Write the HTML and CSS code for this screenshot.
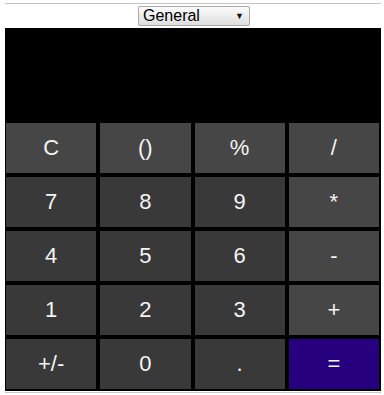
FILE: index.html
```html
<!DOCTYPE html>
<html lang="en">
<head>
  <meta charset="UTF-8" />
  <meta name="viewport" content="width=device-width, initial-scale=1.0" />
  <title>Calculator</title>
  <link rel="stylesheet" href="styles.css">
</head>
<body>
  <hr class="top-rule">
  <div class="mode-bar">
    <div class="mode-select">
      <span class="mode-label">General</span>
      <span class="mode-arrow">&#9660;</span>
    </div>
  </div>

  <div class="calc">
    <div class="display" id="display"></div>
    <div class="keys">
      <button class="key light">C</button>
      <button class="key light">()</button>
      <button class="key light">%</button>
      <button class="key light">/</button>

      <button class="key">7</button>
      <button class="key">8</button>
      <button class="key">9</button>
      <button class="key light">*</button>

      <button class="key">4</button>
      <button class="key">5</button>
      <button class="key">6</button>
      <button class="key light">-</button>

      <button class="key">1</button>
      <button class="key">2</button>
      <button class="key">3</button>
      <button class="key light">+</button>

      <button class="key">+/-</button>
      <button class="key">0</button>
      <button class="key">.</button>
      <button class="key equals">=</button>
    </div>
  </div>
  <div class="bottom-rule"></div>
</body>
</html>
```

FILE: styles.css
```css
body {
  font-family: "Liberation Sans", Arial, sans-serif;
  background: white;
  margin: 0;
  padding: 0 3px 0 5px;
}
.top-rule {
  margin: 3px 0 0 0;
  border: none;
  border-top: 1px solid #c4c4c4;
  height: 0;
}
.mode-bar {
  display: flex;
  justify-content: center;
  padding: 2px 0 2px 0;
}
.mode-select {
  width: 103px;
  height: 18px;
  border: 1px solid #a9a9a9;
  border-radius: 2px;
  background: linear-gradient(#fbfbfb, #dedede);
  display: flex;
  align-items: center;
  justify-content: space-between;
  padding: 0 3px 0 4px;
  box-sizing: content-box;
  margin-left: 2px;
}
.mode-label {
  font-size: 16px;
  color: #000;
  line-height: 18px;
}
.mode-arrow {
  font-size: 9px;
  color: #111;
  margin-right: 2px;
}
.calc {
  background: #000;
  width: 376px;
  padding: 0 2px 2px 1px;
  box-sizing: border-box;
}
.display {
  height: 95px;
}
.keys {
  display: grid;
  grid-template-columns: repeat(4, 1fr);
  grid-auto-rows: 50px;
  gap: 4px;
}
.key {
  border: none;
  margin: 0;
  padding: 0;
  background: #393939;
  color: #f4f4f4;
  font-family: "Liberation Sans", Arial, sans-serif;
  font-size: 22px;
}
.key.light {
  background: #464646;
}
.key.equals {
  background: #26007f;
}
.bottom-rule {
  width: 376px;
  border-top: 1px solid #c8c8c8;
  margin-top: 1px;
}
```
